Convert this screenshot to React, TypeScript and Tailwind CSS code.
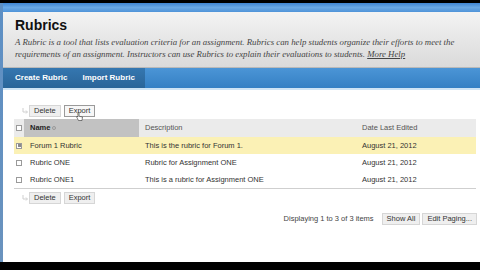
import React from "react";

interface RubricRow {
  name: string;
  description: string;
  date: string;
  checked: boolean;
}

const rows: RubricRow[] = [
  { name: "Forum 1 Rubric", description: "This is the rubric for Forum 1.", date: "August 21, 2012", checked: true },
  { name: "Rubric ONE", description: "Rubric for Assignment ONE", date: "August 21, 2012", checked: false },
  { name: "Rubric ONE1", description: "This is a rubric for Assignment ONE", date: "August 21, 2012", checked: false },
];

const SmallButton: React.FC<{ label: string; active?: boolean; className?: string }> = ({ label, active, className }) => (
  <button
    className={`h-[12px] px-[4px] flex items-center text-[7.5px] leading-none text-[#333] bg-[#efefef] border ${
      active ? "border-[#9a9a9a] bg-[#f7f7f7]" : "border-[#d6d6d6]"
    } ${className ?? ""}`}
  >
    {label}
  </button>
);

const Checkbox: React.FC<{ checked?: boolean }> = ({ checked }) => (
  <span className="w-[6px] h-[6px] border border-[#9a9a9a] bg-white flex items-center justify-center">
    {checked && <span className="w-[3px] h-[3px] bg-[#8a8a8a]" />}
  </span>
);

const ActionRow: React.FC<{ hover?: boolean }> = ({ hover }) => (
  <div className="flex items-center h-[12px]">
    <svg width="8" height="8" viewBox="0 0 8 8" className="ml-[7px]">
      <path d="M2 1 V5 H6" stroke="#cfcfcf" strokeWidth="1" fill="none" />
      <path d="M5 3.5 L6.5 5 L5 6.5" stroke="#cfcfcf" strokeWidth="1" fill="none" />
    </svg>
    <SmallButton label="Delete" />
    <div className="relative ml-[3px]">
      <SmallButton label="Export" active={hover} />
      {hover && (
        <svg width="7" height="9" viewBox="0 0 7 9" className="absolute left-[12px] top-[7px]">
          <path
            d="M2 0.5 V5 L1 4 L0.5 4.8 L2.5 8.5 H6 L6.5 5 L3 4.2 V0.5 Z"
            fill="#ffffff"
            stroke="#333"
            strokeWidth="0.6"
          />
        </svg>
      )}
    </div>
  </div>
);

export default function App() {
  return (
    <div className="w-[480px] h-[270px] overflow-hidden flex flex-col bg-black" style={{ fontFamily: '"Liberation Sans", Arial, sans-serif' }}>
      <div className="h-[3px] bg-black shrink-0" />
      <div className="flex h-[259px] shrink-0">
        {/* window edge */}
        <div className="w-[3px] bg-gradient-to-b from-[#5d8fc4] to-[#6a93be]" />
        <div className="flex-1 flex flex-col bg-white">
          <div className="h-[9px] bg-gradient-to-b from-[#3f86d4] via-[#6aa9e6] to-[#4f93d8]" />

          {/* page header */}
          <div className="h-[56px] pl-[12px] pr-[4px] pt-[5px] bg-gradient-to-b from-[#f3f3f3] to-[#dadada] border-b border-[#b9b9b9]">
            <h1 className="text-[14px] font-bold leading-[17px] text-[#111]">Rubrics</h1>
            <p
              className="mt-[2px] text-[8.8px] italic leading-[12px] text-[#444] whitespace-nowrap"
              style={{ fontFamily: '"Liberation Serif", "Times New Roman", serif' }}
            >
              A Rubric is a tool that lists evaluation criteria for an assignment. Rubrics can help students organize their efforts to meet the
              <br />
              requirements of an assignment. Instructors can use Rubrics to explain their evaluations to students.{" "}
              <span className="underline">More Help</span>
            </p>
          </div>

          {/* action bar */}
          <div className="h-[20px] flex bg-gradient-to-b from-[#4b95d6] to-[#3580c4]">
            <div className="w-[142px] flex items-center pl-[12px] gap-[15px] bg-gradient-to-b from-[#3577b0] to-[#2a6599] text-white text-[8px] font-bold">
              <span>Create Rubric</span>
              <span>Import Rubric</span>
            </div>
          </div>
          <div className="h-[2px] bg-[#cfe4f5]" />

          {/* content */}
          <div className="flex-1 pl-[11px] pr-[3px] pt-[15px] text-[7.5px] text-[#333]">
            <ActionRow hover />

            <div className="mt-[2px] mr-[1px] border-b border-[#cfcfcf]">
              <div className="grid grid-cols-[10px_115px_218px_1fr] h-[18px] items-center bg-[#ebebeb]">
                <div className="flex justify-center">
                  <Checkbox />
                </div>
                <div className="h-full flex items-center pl-[6px] bg-[#c2c2c2] font-bold text-[#222]">
                  Name
                  <span className="ml-[2px] w-[4px] h-[4px] rounded-full border border-[#999]" />
                </div>
                <div className="pl-[6px] text-[#555]">Description</div>
                <div className="pl-[5px] text-[#555]">Date Last Edited</div>
              </div>
              {rows.map((row) => (
                <div
                  key={row.name}
                  className={`grid grid-cols-[10px_115px_218px_1fr] h-[17px] items-center ${row.checked ? "bg-[#fbf1b5]" : "bg-white"}`}
                >
                  <div className="flex justify-center">
                    <Checkbox checked={row.checked} />
                  </div>
                  <div className="pl-[6px]">{row.name}</div>
                  <div className="pl-[6px]">{row.description}</div>
                  <div className="pl-[5px]">{row.date}</div>
                </div>
              ))}
            </div>

            <div className="mt-[3px]">
              <ActionRow />
            </div>

            <div className="mt-[9px] flex items-center justify-end gap-[2px] text-[7.5px]">
              <span className="mr-[6px] text-[#444]">Displaying 1 to 3 of 3 items</span>
              <SmallButton label="Show All" />
              <SmallButton label="Edit Paging..." />
            </div>
          </div>
        </div>
      </div>
      <div className="flex-1 bg-black" />
    </div>
  );
}
